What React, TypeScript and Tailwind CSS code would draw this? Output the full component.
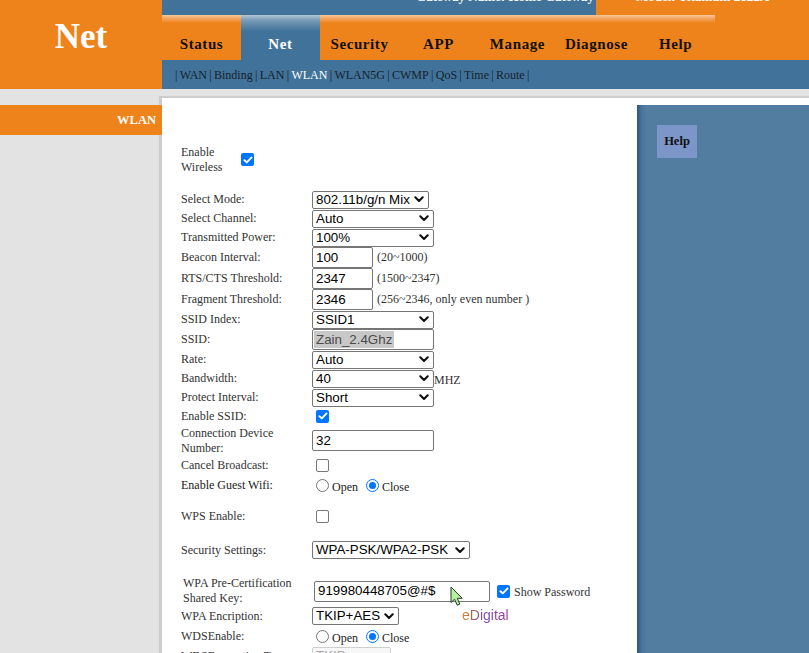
import React from "react";

const serif = "font-['Liberation_Serif','Times_New_Roman',serif]";
const sans = "font-['Liberation_Sans',Arial,sans-serif]";
const labelCls = "text-[12px] leading-[15px] text-[#333]";

function Chevron({ color = "#111" }: { color?: string }) {
  return (
    <svg width="10" height="7" viewBox="0 0 10 7">
      <path d="M1.3 1.3 L5 5 L8.7 1.3" fill="none" stroke={color} strokeWidth="2.1" strokeLinecap="round" strokeLinejoin="round" />
    </svg>
  );
}

function Select({ value, w, disabled }: { value: string; w: string; disabled?: boolean }) {
  return (
    <div
      className={`${w} h-[18px] border rounded-[2px] flex items-center justify-between pl-[3px] pr-[4px] ${sans} text-[13.33px] leading-none ${
        disabled ? "border-[#cfcfcf] bg-[#f7f7f7] text-[#a8a8a8]" : "border-[#767676] bg-white text-black"
      }`}
    >
      <span>{value}</span>
      <Chevron color={disabled ? "#b5b5b5" : "#111"} />
    </div>
  );
}

function TextInput({ value, w }: { value: string; w: string }) {
  return (
    <div className={`${w} h-[21px] border border-[#767676] rounded-[2px] bg-white flex items-center pl-[3px] ${sans} text-[13.33px] leading-none text-black`}>
      {value}
    </div>
  );
}

function Check({ checked }: { checked?: boolean }) {
  return checked ? (
    <span className="w-[13px] h-[13px] rounded-[2px] bg-[#0075ff] flex items-center justify-center shrink-0">
      <svg width="10" height="8" viewBox="0 0 10 8">
        <path d="M1.4 4.2 L3.8 6.4 L8.6 1.4" stroke="white" strokeWidth="1.9" fill="none" strokeLinecap="round" strokeLinejoin="round" />
      </svg>
    </span>
  ) : (
    <span className="block w-[13px] h-[13px] rounded-[2px] border border-[#767676] bg-white shrink-0" />
  );
}

function Radio({ checked }: { checked?: boolean }) {
  return checked ? (
    <span className="w-[13px] h-[13px] rounded-full border border-[#0075ff] bg-white flex items-center justify-center shrink-0">
      <span className="block w-[7px] h-[7px] rounded-full bg-[#0075ff]" />
    </span>
  ) : (
    <span className="block w-[13px] h-[13px] rounded-full border border-[#767676] bg-white shrink-0" />
  );
}

function Row({ h, label, children }: { h: string; label: React.ReactNode; children?: React.ReactNode }) {
  return (
    <div className={`flex items-center ${h}`}>
      <div className={`w-[131px] shrink-0 ${labelCls}`}>{label}</div>
      <div className="flex items-center">{children}</div>
    </div>
  );
}

function Hint({ children }: { children: React.ReactNode }) {
  return <span className="ml-[4px] text-[12px] leading-[15px] text-[#333]">{children}</span>;
}

function RadioPair({ openChecked }: { openChecked?: boolean }) {
  return (
    <div className="flex items-center text-[12px] text-[#222]">
      <span className="ml-[4px]"><Radio checked={openChecked} /></span>
      <span className="ml-[3px] mt-[3px]">Open</span>
      <span className="ml-[8px]"><Radio checked={!openChecked} /></span>
      <span className="ml-[3px] mt-[3px]">Close</span>
    </div>
  );
}

const tabs = ["Status", "Net", "Security", "APP", "Manage", "Diagnose", "Help"];
const subs = ["WAN", "Binding", "LAN", "WLAN", "WLAN5G", "CWMP", "QoS", "Time", "Route"];

export default function App() {
  return (
    <div className={`relative w-[809px] h-[653px] overflow-hidden bg-[#e6e6e6] ${serif}`}>
      {/* Header */}
      <div className="flex h-[89px]">
        <div className="w-[162px] bg-[#ef831b] flex justify-center pt-[19px]">
          <span className="text-[35px] leading-[35px] font-bold text-white">Net</span>
        </div>
        <div className="flex-1 flex flex-col">
          <div className="h-[15px] flex overflow-hidden">
            <div className="flex-1 bg-[#41739a] flex justify-end pr-[2px]">
              <span className="mt-[-10px] text-[13px] leading-[13px] font-bold text-white whitespace-nowrap">Gateway Name: Home Gateway</span>
            </div>
            <div className="w-[213px] bg-[#ef831b] flex justify-center">
              <span className="mt-[-10px] text-[13px] leading-[13px] font-bold text-white whitespace-nowrap">Model: Titanium 2122A</span>
            </div>
          </div>
          <div className="h-[45px] bg-[#ef831b] flex">
            {tabs.map((t) =>
              t === "Net" ? (
                <div key={t} className="w-[79px] flex justify-center pt-[22px] bg-[linear-gradient(180deg,#b4c6d4_0px,#7a9cb8_5px,#41739a_16px)]">
                  <span className="text-[15px] leading-[15px] font-bold tracking-[0.6px] text-white">{t}</span>
                </div>
              ) : (
                <div key={t} className="w-[79px] flex justify-center pt-[22px] bg-[linear-gradient(180deg,#f8c896_0px,#f4a866_3px,#ef831b_8px)]">
                  <span className="text-[15px] leading-[15px] font-bold tracking-[0.6px] text-[#111]">{t}</span>
                </div>
              )
            )}
          </div>
          <div className="h-[29px] bg-[#41739a] flex items-center pl-[13px] pt-[1px] text-[12px] leading-[15px] text-[#17212b] whitespace-nowrap">
            <span className="mr-[2.3px]">|</span>
            {subs.map((s) => (
              <span key={s}>
                <span className={s === "WLAN" ? "text-white" : ""}>{s}</span>
                <span className="mx-[2.3px]">|</span>
              </span>
            ))}
          </div>
        </div>
      </div>

      {/* Body */}
      <div className="flex items-start bg-[#e3e3e3]">
        <div className="w-[159px] shrink-0 pt-[16px] relative z-10">
          <div className="w-[162px] h-[30px] bg-[#ef831b] flex items-center justify-end pr-[6px]">
            <span className="text-[12.5px] font-bold text-white">WLAN</span>
          </div>
        </div>
        <div className="flex-1 mt-[7px] border-t-2 border-l-[3px] border-[#cdcdcd] bg-white flex items-stretch">
          {/* Form */}
          <div className="w-[475px] shrink-0 pl-[19px] pt-[45px] pb-[40px]">
            <div className="flex items-center h-[33px]">
              <div className={`w-[56px] ${labelCls}`}>Enable Wireless</div>
              <span className="ml-[4px]"><Check checked /></span>
            </div>
            <div className="mt-[14px]">
              <Row h="h-[19px]" label="Select Mode:"><Select w="w-[117px]" value="802.11b/g/n Mix" /></Row>
              <Row h="h-[19px]" label="Select Channel:"><Select w="w-[122px]" value="Auto" /></Row>
              <Row h="h-[19px]" label="Transmitted Power:"><Select w="w-[122px]" value="100%" /></Row>
              <Row h="h-[21px]" label="Beacon Interval:"><TextInput w="w-[61px]" value="100" /><Hint>(20~1000)</Hint></Row>
              <Row h="h-[21px]" label="RTS/CTS Threshold:"><TextInput w="w-[61px]" value="2347" /><Hint>(1500~2347)</Hint></Row>
              <Row h="h-[21px]" label="Fragment Threshold:"><TextInput w="w-[61px]" value="2346" /><Hint>(256~2346, only even number )</Hint></Row>
              <Row h="h-[19px]" label="SSID Index:"><Select w="w-[122px]" value="SSID1" /></Row>
              <Row h="h-[21px]" label="SSID:">
                <div className={`w-[122px] h-[21px] border border-[#767676] rounded-[2px] bg-white flex items-center pl-[1px] ${sans} text-[13.33px] leading-none`}>
                  <span className="h-[17px] flex items-center px-[2px] bg-[#c8c8c8] text-[#4a4a4a]">Zain_2.4Ghz</span>
                </div>
              </Row>
              <Row h="h-[19px]" label="Rate:"><Select w="w-[122px]" value="Auto" /></Row>
              <Row h="h-[19px]" label="Bandwidth:"><Select w="w-[122px]" value="40" /><span className="text-[12px] text-[#333] mt-[2px]">MHZ</span></Row>
              <Row h="h-[19px]" label="Protect Interval:"><Select w="w-[122px]" value="Short" /></Row>
              <Row h="h-[18px]" label="Enable SSID:"><span className="ml-[4px]"><Check checked /></span></Row>
              <Row h="h-[31px]" label={<>Connection Device<br />Number:</>}><TextInput w="w-[122px]" value="32" /></Row>
              <Row h="h-[19px]" label="Cancel Broadcast:"><span className="ml-[4px]"><Check /></span></Row>
              <Row h="h-[21px]" label={<span className="text-[#1a1a1a]">Enable Guest Wifi:</span>}><RadioPair /></Row>

              <div className="mt-[10px]">
                <Row h="h-[20px]" label="WPS Enable:"><span className="ml-[4px]"><Check /></span></Row>
              </div>
              <div className="mt-[14px]">
                <Row h="h-[20px]" label="Security Settings:"><Select w="w-[158px]" value="WPA-PSK/WPA2-PSK" /></Row>
              </div>
              <div className="mt-[17px]">
                <Row h="h-[28px]" label={<span className="pl-[2px] block">WPA Pre-Certification<br />Shared Key:</span>}>
                  <div className="ml-[2px]"><TextInput w="w-[176px]" value="919980448705@#$" /></div>
                  <span className="ml-[7px]"><Check checked /></span>
                  <span className="ml-[4px] text-[12px] text-[#333] mt-[2px]">Show Password</span>
                </Row>
              </div>
              <Row h="h-[22px]" label="WPA Encription:">
                <Select w="w-[87px]" value="TKIP+AES" />
                <span className={`ml-[63px] mt-[-2px] ${sans} text-[14px] leading-[16px] bg-[linear-gradient(90deg,#d88a2e_0%,#b0683f_18%,#7c4bb3_45%,#a23a9e_100%)] bg-clip-text text-transparent`}>
                  eDigital
                </span>
              </Row>
              <Row h="h-[19px]" label="WDSEnable:"><RadioPair /></Row>
              <Row h="h-[20px]" label="WDSEncryption Type:"><Select w="w-[79px]" value="TKIP" disabled /></Row>
            </div>
          </div>
          {/* Help panel */}
          <div className="flex-1 mt-[7px] bg-[linear-gradient(90deg,#2e5576_0px,#46709a_4px,#527da1_9px)]">
            <div className="ml-[20px] mt-[20px] w-[40px] h-[33px] bg-[#7c96c9] flex items-center justify-center">
              <span className="text-[12.5px] font-bold text-[#111]">Help</span>
            </div>
          </div>
        </div>
      </div>

      {/* Mouse cursor overlay */}
      <svg className="absolute left-[450px] top-[586px]" width="14" height="21" viewBox="0 0 14 21">
        <path d="M1 1 L1 16.5 L4.6 13.2 L7.2 19.2 L9.8 18.1 L7.3 12.3 L12.2 12.3 Z" fill="#b7f0a0" stroke="#2a3a2a" strokeWidth="1" strokeLinejoin="round" />
      </svg>
    </div>
  );
}
